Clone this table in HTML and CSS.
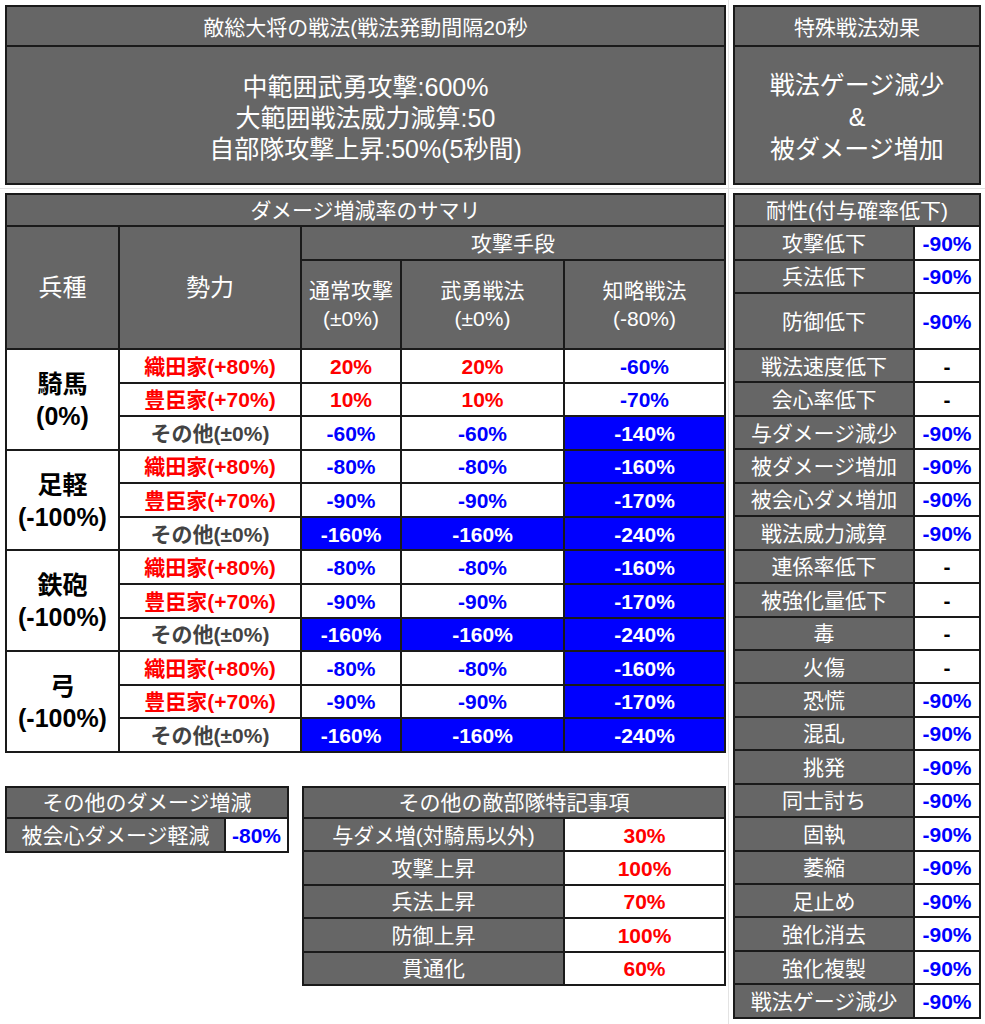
FILE: index.html
```html
<!DOCTYPE html>
<html lang="ja">
<head>
<meta charset="utf-8">
<title>敵総大将の戦法</title>
<link rel="stylesheet" href="styles.css">
</head>
<body>
<div class="page">
  <section class="box">
    <div class="box-title">敵総大将の戦法(戦法発動間隔20秒</div>
    <div class="box-body">中範囲武勇攻撃:600%<br>大範囲戦法威力減算:50<br>自部隊攻撃上昇:50%(5秒間)</div>
  </section>
  <section class="box">
    <div class="box-title">特殊戦法効果</div>
    <div class="box-body body-special">戦法ゲージ減少<br>&amp;<br>被ダメージ増加</div>
  </section>

  <div class="left-col">
    <div class="grid summary">
      <div class="c hdr span5">ダメージ増減率のサマリ</div>
      <div class="c hdr big rs2">兵種</div>
      <div class="c hdr big rs2">勢力</div>
      <div class="c hdr span3">攻撃手段</div>
      <div class="c hdr two">通常攻撃<br>(±0%)</div>
      <div class="c hdr two">武勇戦法<br>(±0%)</div>
      <div class="c hdr two">知略戦法<br>(-80%)</div>

      <div class="c unit rs3">騎馬<br>(0%)</div>
      <div class="c v red">織田家(+80%)</div>
      <div class="c v red">20%</div>
      <div class="c v red">20%</div>
      <div class="c v blue">-60%</div>
      <div class="c v red">豊臣家(+70%)</div>
      <div class="c v red">10%</div>
      <div class="c v red">10%</div>
      <div class="c v blue">-70%</div>
      <div class="c v other">その他(±0%)</div>
      <div class="c v blue">-60%</div>
      <div class="c v blue">-60%</div>
      <div class="c v fill">-140%</div>

      <div class="c unit rs3">足軽<br>(-100%)</div>
      <div class="c v red">織田家(+80%)</div>
      <div class="c v blue">-80%</div>
      <div class="c v blue">-80%</div>
      <div class="c v fill">-160%</div>
      <div class="c v red">豊臣家(+70%)</div>
      <div class="c v blue">-90%</div>
      <div class="c v blue">-90%</div>
      <div class="c v fill">-170%</div>
      <div class="c v other">その他(±0%)</div>
      <div class="c v fill">-160%</div>
      <div class="c v fill">-160%</div>
      <div class="c v fill">-240%</div>

      <div class="c unit rs3">鉄砲<br>(-100%)</div>
      <div class="c v red">織田家(+80%)</div>
      <div class="c v blue">-80%</div>
      <div class="c v blue">-80%</div>
      <div class="c v fill">-160%</div>
      <div class="c v red">豊臣家(+70%)</div>
      <div class="c v blue">-90%</div>
      <div class="c v blue">-90%</div>
      <div class="c v fill">-170%</div>
      <div class="c v other">その他(±0%)</div>
      <div class="c v fill">-160%</div>
      <div class="c v fill">-160%</div>
      <div class="c v fill">-240%</div>

      <div class="c unit rs3">弓<br>(-100%)</div>
      <div class="c v red">織田家(+80%)</div>
      <div class="c v blue">-80%</div>
      <div class="c v blue">-80%</div>
      <div class="c v fill">-160%</div>
      <div class="c v red">豊臣家(+70%)</div>
      <div class="c v blue">-90%</div>
      <div class="c v blue">-90%</div>
      <div class="c v fill">-170%</div>
      <div class="c v other">その他(±0%)</div>
      <div class="c v fill">-160%</div>
      <div class="c v fill">-160%</div>
      <div class="c v fill">-240%</div>
    </div>

    <div class="lower">
      <div class="grid misc">
        <div class="c hdr span2">その他のダメージ増減</div>
        <div class="c hdr">被会心ダメージ軽減</div>
        <div class="c v blue">-80%</div>
      </div>
      <div class="grid notes">
        <div class="c hdr span2">その他の敵部隊特記事項</div>
        <div class="c hdr">与ダメ増(対騎馬以外)</div>
        <div class="c v red">30%</div>
        <div class="c hdr">攻撃上昇</div>
        <div class="c v red">100%</div>
        <div class="c hdr">兵法上昇</div>
        <div class="c v red">70%</div>
        <div class="c hdr">防御上昇</div>
        <div class="c v red">100%</div>
        <div class="c hdr">貫通化</div>
        <div class="c v red">60%</div>
      </div>
    </div>
  </div>

  <div class="grid resist">
    <div class="c hdr span2">耐性(付与確率低下)</div>
    <div class="c hdr">攻撃低下</div><div class="c v blue">-90%</div>
    <div class="c hdr">兵法低下</div><div class="c v blue">-90%</div>
    <div class="c hdr">防御低下</div><div class="c v blue">-90%</div>
    <div class="c hdr">戦法速度低下</div><div class="c v dash">-</div>
    <div class="c hdr">会心率低下</div><div class="c v dash">-</div>
    <div class="c hdr">与ダメージ減少</div><div class="c v blue">-90%</div>
    <div class="c hdr">被ダメージ増加</div><div class="c v blue">-90%</div>
    <div class="c hdr">被会心ダメ増加</div><div class="c v blue">-90%</div>
    <div class="c hdr">戦法威力減算</div><div class="c v blue">-90%</div>
    <div class="c hdr">連係率低下</div><div class="c v dash">-</div>
    <div class="c hdr">被強化量低下</div><div class="c v dash">-</div>
    <div class="c hdr">毒</div><div class="c v dash">-</div>
    <div class="c hdr">火傷</div><div class="c v dash">-</div>
    <div class="c hdr">恐慌</div><div class="c v blue">-90%</div>
    <div class="c hdr">混乱</div><div class="c v blue">-90%</div>
    <div class="c hdr">挑発</div><div class="c v blue">-90%</div>
    <div class="c hdr">同士討ち</div><div class="c v blue">-90%</div>
    <div class="c hdr">固執</div><div class="c v blue">-90%</div>
    <div class="c hdr">萎縮</div><div class="c v blue">-90%</div>
    <div class="c hdr">足止め</div><div class="c v blue">-90%</div>
    <div class="c hdr">強化消去</div><div class="c v blue">-90%</div>
    <div class="c hdr">強化複製</div><div class="c v blue">-90%</div>
    <div class="c hdr">戦法ゲージ減少</div><div class="c v blue">-90%</div>
  </div>
</div>
</body>
</html>
```

FILE: styles.css
```css
* {
  box-sizing: border-box;
}

html, body {
  margin: 0;
  padding: 0;
  background: #ffffff;
}

body {
  font-family: "Liberation Sans", "Noto Sans CJK JP", sans-serif;
  font-size: 21px;
  color: #000;
}

.page {
  display: grid;
  grid-template-columns: 721px 248px;
  grid-template-rows: 180px auto;
  column-gap: 7px;
  row-gap: 8px;
  padding: 5px 0 0 5px;
  align-items: start;
  min-height: 1024px;
  background:
    linear-gradient(#e3e3e3, #e3e3e3) no-repeat 728px 0 / 1px 100%,
    linear-gradient(#e3e3e3, #e3e3e3) no-repeat 0 188px / 100% 1px,
    #ffffff;
}

/* top boxes */
.box {
  height: 180px;
  border: 2px solid #1a1a1a;
  background: #666666;
  color: #ffffff;
  display: flex;
  flex-direction: column;
}

.box-title {
  height: 40px;
  border-bottom: 2px solid #1a1a1a;
  display: flex;
  align-items: center;
  justify-content: center;
  font-size: 21px;
}

.box-body {
  flex: 1;
  display: flex;
  align-items: center;
  justify-content: center;
  text-align: center;
  font-size: 25px;
  line-height: 31px;
  padding-top: 7px;
}

.body-special {
  line-height: 32px;
  padding-top: 3px;
}

/* generic grid table */
.grid {
  display: grid;
  border-top: 2px solid #1a1a1a;
  border-left: 2px solid #1a1a1a;
  background: #ffffff;
}

.c {
  border-right: 2px solid #1a1a1a;
  border-bottom: 2px solid #1a1a1a;
  display: flex;
  align-items: center;
  justify-content: center;
  text-align: center;
  white-space: nowrap;
  line-height: 1.2;
  padding-top: 1px;
}

.hdr {
  background: #666666;
  color: #ffffff;
  font-size: 21px;
}

.big {
  font-size: 24px;
}

.two {
  line-height: 28px;
}

.span2 { grid-column: span 2; }
.span3 { grid-column: span 3; }
.span5 { grid-column: span 5; }
.rs2 { grid-row: span 2; }
.rs3 { grid-row: span 3; }

.v {
  font-weight: bold;
  font-size: 21px;
  background: #ffffff;
}

.red { color: #ff0000; }
.blue { color: #0000ff; }
.other { color: #434343; }
.dash { color: #000000; }

.fill {
  background: #0000ff;
  color: #ffffff;
}

.unit {
  font-weight: bold;
  font-size: 25px;
  line-height: 32px;
  color: #000000;
  background: #ffffff;
}

/* layouts */
.left-col {
  display: flex;
  flex-direction: column;
}

.summary {
  width: 721px;
  grid-template-columns: 113px 182px 100px 163px 161px;
  grid-template-rows: 32px 34px 89px repeat(12, 33.58px);
}

.lower {
  display: flex;
  align-items: flex-start;
  gap: 13px;
  margin-top: 33px;
}

.misc {
  width: 284px;
  grid-template-columns: 219px 63px;
  grid-template-rows: 31px 34px;
}

.notes {
  width: 424px;
  grid-template-columns: 261px 161px;
  grid-template-rows: 31px repeat(5, 33.4px);
}

.resist {
  width: 248px;
  grid-template-columns: 180px 66px;
  grid-template-rows: 32px 34px 33px 56px repeat(20, 33.45px);
}
```
